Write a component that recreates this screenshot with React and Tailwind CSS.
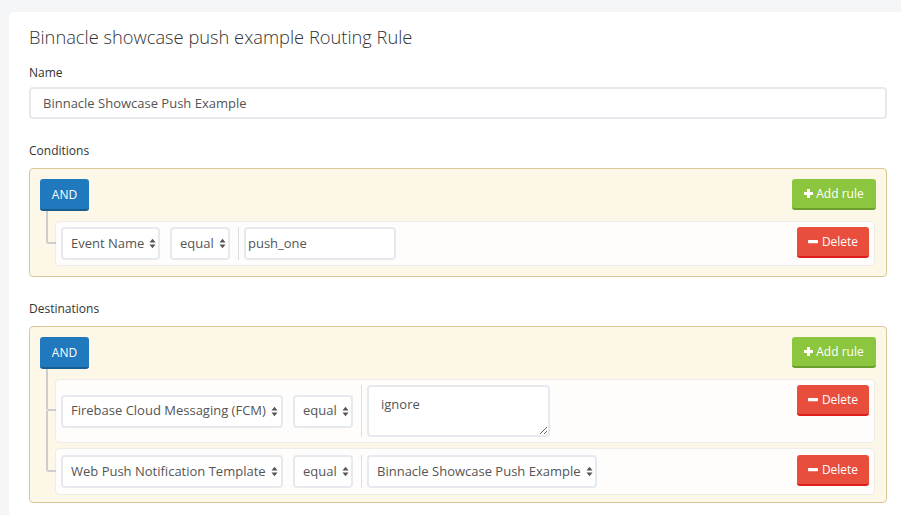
import React from "react";

const font = { fontFamily: '"Open Sans", "Liberation Sans", sans-serif' };

function Arrows() {
  return (
    <svg width="7" height="11" viewBox="0 0 7 11" className="ml-[5px] shrink-0">
      <path d="M0.5 4.5 L3.5 0.8 L6.5 4.5 Z" fill="#555" />
      <path d="M0.5 6.5 L3.5 10.2 L6.5 6.5 Z" fill="#555" />
    </svg>
  );
}

function Sel({ children, w }) {
  return (
    <div
      className={`flex h-[33px] items-center rounded-[4px] border-2 border-[#e6e9ed] bg-white pl-[8px] pr-[6px] text-[13px] text-[#555] ${w}`}
    >
      <span className="whitespace-nowrap">{children}</span>
      <Arrows />
    </div>
  );
}

function AndBtn() {
  return (
    <div className="flex h-[32px] w-[49px] items-center justify-center rounded-[3px] border-b-2 border-[#185d91] bg-[#2179bd] pt-[1px] text-[12px] text-white">
      AND
    </div>
  );
}

function AddRule() {
  return (
    <div className="flex h-[31px] w-[84px] items-center justify-center gap-[3px] rounded-[3px] border-b-2 border-[#6b9e2d] bg-[#8cc63f] text-[12px] text-white">
      <svg width="9" height="9" viewBox="0 0 9 9">
        <rect x="3" y="0" width="3" height="9" fill="white" />
        <rect x="0" y="3" width="9" height="3" fill="white" />
      </svg>
      <span>Add rule</span>
    </div>
  );
}

function DeleteBtn() {
  return (
    <div className="ml-auto flex h-[31px] w-[72px] shrink-0 items-center justify-center gap-[4px] self-start rounded-[3px] border-b-2 border-[#df1f1b] bg-[#e94d3c] text-[12px] text-white">
      <svg width="10" height="4" viewBox="0 0 10 4">
        <rect x="0" y="0" width="10" height="3.2" rx="0.6" fill="white" />
      </svg>
      <span>Delete</span>
    </div>
  );
}

function Row({ children, gapAbove, last, pad = "p-[5px]" }) {
  return (
    <div className={`relative flex items-center rounded-[4px] border border-[#eeece8] bg-[#fefdfb] ${pad}`}>
      <span
        className="absolute left-[-10px] w-[10px] rounded-bl-[3px] border-b-2 border-l-2 border-[#cccccc]"
        style={{ top: -gapAbove - 1, height: `calc(50% + ${gapAbove}px + 1px)` }}
      />
      {!last && (
        <span className="absolute left-[-10px] top-1/2 bottom-[-7px] w-[10px] border-l-2 border-[#cccccc]" />
      )}
      {children}
    </div>
  );
}

function Box({ children, pb }) {
  return (
    <div className={`rounded-[4px] border border-[#dcc896] bg-[#fdf7e7] px-[10px] pt-[10px] ${pb}`}>
      <div className="flex items-start justify-between">
        <AndBtn />
        <AddRule />
      </div>
      <div className="ml-[15px] mr-[1px] mt-[10px] flex flex-col gap-[5px]">{children}</div>
    </div>
  );
}

export default function App() {
  return (
    <div className="h-[515px] w-[901px] overflow-hidden bg-[#f4f5f7]" style={font}>
      <div className="ml-[9px] mt-[12px] h-[520px] w-[898px] rounded-[5px] bg-white px-[20px] pt-[12px]">
        <h1 className="text-[18.3px] font-light leading-[25px] text-[#333]">
          Binnacle showcase push example Routing Rule
        </h1>
        <div className="mt-[15px] text-[12px] leading-[17px] text-[#333]">Name</div>
        <div className="mt-[6px] flex h-[32px] items-center rounded-[4px] border-2 border-[#e6e9ed] px-[12px] pt-[1px] text-[13px] text-[#555]">
          Binnacle Showcase Push Example
        </div>

        <div className="mt-[23px] text-[12px] leading-[17px] text-[#333]">Conditions</div>
        <div className="mt-[9px]">
          <Box pb="pb-[10px]">
            <Row gapAbove={10} last>
              <Sel w="w-[99px]">Event Name</Sel>
              <div className="ml-[10px]">
                <Sel w="w-[60px]">equal</Sel>
              </div>
              <div className="ml-[8px] flex self-stretch border-l border-[#dddddd] pl-[5px]">
                <div className="flex h-[33px] w-[152px] items-center rounded-[4px] border-2 border-[#e6e9ed] bg-white px-[2px] text-[13px] text-[#555]">
                  push_one
                </div>
              </div>
              <DeleteBtn />
            </Row>
          </Box>
        </div>

        <div className="mt-[23px] text-[12px] leading-[17px] text-[#333]">Destinations</div>
        <div className="mt-[9px]">
          <Box pb="pb-[7px]">
            <Row gapAbove={10}>
              <Sel w="w-[222px]">Firebase Cloud Messaging (FCM)</Sel>
              <div className="ml-[10px]">
                <Sel w="w-[60px]">equal</Sel>
              </div>
              <div className="ml-[8px] flex self-stretch border-l border-[#dddddd] pl-[5px]">
                <textarea
                  readOnly
                  value="ignore"
                  className="h-[52px] w-[183px] resize rounded-[4px] border-2 border-[#e6e9ed] bg-white px-[12px] pt-[8px] pb-[4px] text-[13px] leading-[18px] text-[#555] outline-none"
                  style={font}
                />
              </div>
              <DeleteBtn />
            </Row>
            <Row gapAbove={5} last pad="px-[5px] py-[6px]">
              <Sel w="w-[222px]">Web Push Notification Template</Sel>
              <div className="ml-[10px]">
                <Sel w="w-[60px]">equal</Sel>
              </div>
              <div className="ml-[8px] flex self-stretch border-l border-[#dddddd] pl-[5px]">
                <Sel w="w-[230px]">Binnacle Showcase Push Example</Sel>
              </div>
              <DeleteBtn />
            </Row>
          </Box>
        </div>
      </div>
    </div>
  );
}
